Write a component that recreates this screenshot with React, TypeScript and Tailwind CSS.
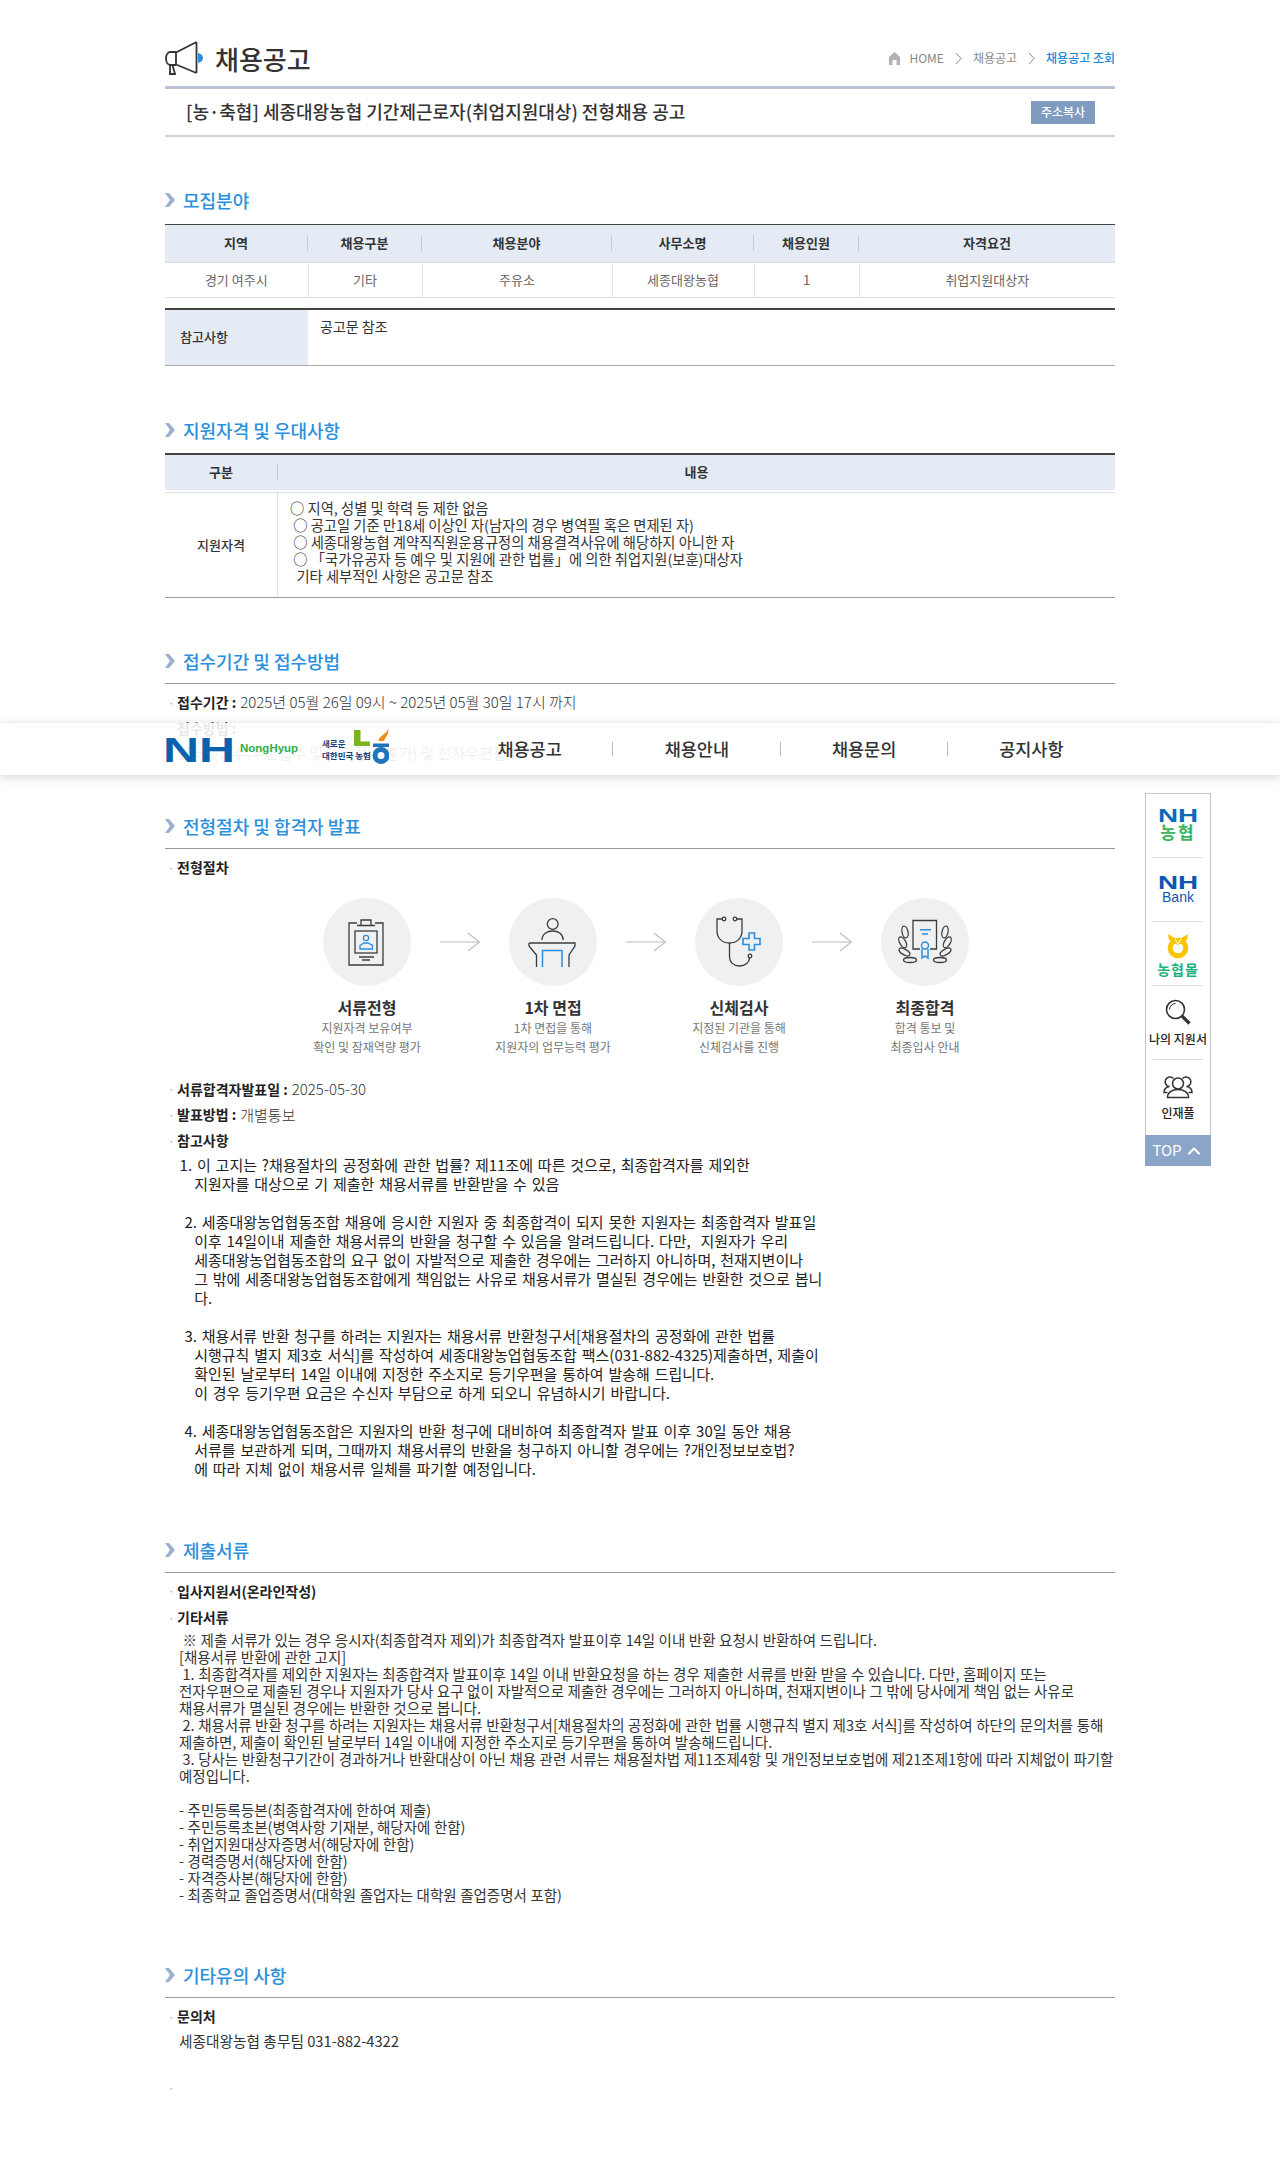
import { ChevronUp } from "lucide-react";

const font = { fontFamily: '"Noto Sans CJK KR", "Noto Sans", sans-serif' };

const steps = [
  { title: "서류전형", sub: ["지원자격 보유여부", "확인 및 잠재역량 평가"] },
  { title: "1차 면접", sub: ["1차 면접을 통해", "지원자의 업무능력 평가"] },
  { title: "신체검사", sub: ["지정된 기관을 통해", "신체검사를 진행"] },
  { title: "최종합격", sub: ["합격 통보 및", "최종입사 안내"] },
];

const noticeLines = [
  "   1. 이 고지는 ?채용절차의 공정화에 관한 법률? 제11조에 따른 것으로, 최종합격자를 제외한",
  "      지원자를 대상으로 기 제출한 채용서류를 반환받을 수 있음",
  "",
  "    2. 세종대왕농업협동조합 채용에 응시한 지원자 중 최종합격이 되지 못한 지원자는 최종합격자 발표일",
  "      이후 14일이내 제출한 채용서류의 반환을 청구할 수 있음을 알려드립니다. 다만,  지원자가 우리",
  "      세종대왕농업협동조합의 요구 없이 자발적으로 제출한 경우에는 그러하지 아니하며, 천재지변이나",
  "      그 밖에 세종대왕농업협동조합에게 책임없는 사유로 채용서류가 멸실된 경우에는 반환한 것으로 봅니",
  "      다.",
  "",
  "    3. 채용서류 반환 청구를 하려는 지원자는 채용서류 반환청구서[채용절차의 공정화에 관한 법률",
  "      시행규칙 별지 제3호 서식]를 작성하여 세종대왕농업협동조합 팩스(031-882-4325)제출하면, 제출이",
  "      확인된 날로부터 14일 이내에 지정한 주소지로 등기우편을 통하여 발송해 드립니다.",
  "      이 경우 등기우편 요금은 수신자 부담으로 하게 되오니 유념하시기 바랍니다.",
  "",
  "    4. 세종대왕농업협동조합은 지원자의 반환 청구에 대비하여 최종합격자 발표 이후 30일 동안 채용",
  "      서류를 보관하게 되며, 그때까지 채용서류의 반환을 청구하지 아니할 경우에는 ?개인정보보호법?",
  "      에 따라 지체 없이 채용서류 일체를 파기할 예정입니다.",
];

const docLines = [
  " ※ 제출 서류가 있는 경우 응시자(최종합격자 제외)가 최종합격자 발표이후 14일 이내 반환 요청시 반환하여 드립니다.",
  "[채용서류 반환에 관한 고지]",
  " 1. 최종합격자를 제외한 지원자는 최종합격자 발표이후 14일 이내 반환요청을 하는 경우 제출한 서류를 반환 받을 수 있습니다. 다만, 홈페이지 또는",
  "전자우편으로 제출된 경우나 지원자가 당사 요구 없이 자발적으로 제출한 경우에는 그러하지 아니하며, 천재지변이나 그 밖에 당사에게 책임 없는 사유로",
  "채용서류가 멸실된 경우에는 반환한 것으로 봅니다.",
  " 2. 채용서류 반환 청구를 하려는 지원자는 채용서류 반환청구서[채용절차의 공정화에 관한 법률 시행규칙 별지 제3호 서식]를 작성하여 하단의 문의처를 통해",
  "제출하면, 제출이 확인된 날로부터 14일 이내에 지정한 주소지로 등기우편을 통하여 발송해드립니다.",
  " 3. 당사는 반환청구기간이 경과하거나 반환대상이 아닌 채용 관련 서류는 채용절차법 제11조제4항 및 개인정보보호법에 제21조제1항에 따라 지체없이 파기할",
  "예정입니다.",
  "",
  "- 주민등록등본(최종합격자에 한하여 제출)",
  "- 주민등록초본(병역사항 기재분, 해당자에 한함)",
  "- 취업지원대상자증명서(해당자에 한함)",
  "- 경력증명서(해당자에 한함)",
  "- 자격증사본(해당자에 한함)",
  "- 최종학교 졸업증명서(대학원 졸업자는 대학원 졸업증명서 포함)",
];

const Chevron = () => (
  <svg width="10" height="14" viewBox="0 0 10 14" className="shrink-0">
    <path d="M0 0h4l6 7-6 7H0l5-7z" fill="#9db1cd" />
  </svg>
);

const SectionTitle = ({ children, line }: { children: string; line?: boolean }) => (
  <div>
    <div className="flex items-center gap-2 h-6">
      <Chevron />
      <h2 className="text-[18px] leading-6 font-medium text-[#2a8fdc]">{children}</h2>
    </div>
    {line && <div className="mt-[10px] border-t border-[#999]" />}
  </div>
);

const Row = ({ label, value, h = "h-[26px]" }: { label?: string; value?: string; h?: string }) => (
  <div className={`flex items-center text-[14px] text-[#333] ${h}`}>
    <span className="w-3 pl-[3px] text-[#aaa] text-[12px]">·</span>
    {label && <b className="font-bold text-[#222]">{label}</b>}
    {value && <span className="ml-1 text-[15px] font-light">{value}</span>}
  </div>
);

const ClipIcon = () => (
  <svg width="88" height="88" viewBox="0 0 88 88" fill="none" strokeWidth="1.3">
    <path d="M34 25h-8v42h34V25h-8" stroke="#3c3c3c" />
    <path d="M38 27v-5h10v5M34 27.5h18" stroke="#3c3c3c" />
    <rect x="32" y="33" width="22" height="22" stroke="#3c3c3c" />
    <circle cx="43" cy="40" r="2.6" stroke="#2a8fdc" />
    <path d="M37 51v-3.5l4-2.5h4l4.5 2.5V51z" stroke="#2a8fdc" />
    <path d="M36 59h15M39 62h8" stroke="#3c3c3c" />
  </svg>
);

const PodiumIcon = () => (
  <svg width="88" height="88" viewBox="0 0 88 88" fill="none" strokeWidth="1.3">
    <circle cx="43.7" cy="26" r="5.4" stroke="#3c3c3c" />
    <path d="M33 42c0-6 5-9 10.7-9s10.500 3 10.500 9" stroke="#3c3c3c" />
    <path d="M20 45h46v3l-6 9v12M20 48l7.500 9v12M20 45v3M66 45v3" stroke="#3c3c3c" />
    <path d="M33.500 69V52.500h19.500V69" stroke="#2a8fdc" strokeWidth="1.500" />
  </svg>
);

const StethIcon = () => (
  <svg width="88" height="88" viewBox="0 0 88 88" fill="none" strokeWidth="1.3">
    <circle cx="29" cy="21" r="1.800" stroke="#3c3c3c" />
    <circle cx="40" cy="21" r="1.800" stroke="#3c3c3c" />
    <path d="M27 21h-5v12c0 7 5 12 12.500 12S47 40 47 33V21h-5" stroke="#3c3c3c" />
    <path d="M34.500 45v14c0 5 4 9 10 9s10-4 10-8v-1" stroke="#3c3c3c" />
    <circle cx="55" cy="58" r="1.800" stroke="#3c3c3c" />
    <path d="M54 35h5.500v5.500h5.500v6h-5.500V52H54v-5.500h-6v-6h6z" stroke="#2a8fdc" strokeWidth="1.600" />
  </svg>
);

const leaves = [
  { cx: 24, cy: 34, rx: 3, ry: 6, r: -12 },
  { cx: 21.7, cy: 44.300, rx: 3, ry: 6, r: -30 },
  { cx: 23.500, cy: 54, rx: 6, ry: 2.800, r: 30 },
  { cx: 29, cy: 62, rx: 6.500, ry: 2.500, r: 0 },
];

const LaurelIcon = () => (
  <svg width="88" height="88" viewBox="0 0 88 88" fill="none" strokeWidth="1.3">
    <path d="M39 51h-7V22.500h23.500V51H49" stroke="#3c3c3c" />
    <path d="M39 31.700h11M41 36h6" stroke="#2a8fdc" strokeWidth="1.500" />
    <circle cx="44" cy="47.500" r="3.500" stroke="#2a8fdc" strokeWidth="1.500" />
    <path d="M41 51v9l3-2 3 2v-9" stroke="#2a8fdc" strokeWidth="1.500" />
    {leaves.map((l, i) => (
      <g key={i} stroke="#3c3c3c">
        <ellipse cx={l.cx} cy={l.cy} rx={l.rx} ry={l.ry} transform={`rotate(${l.r} ${l.cx} ${l.cy})`} />
        <ellipse cx={88 - l.cx} cy={l.cy} rx={l.rx} ry={l.ry} transform={`rotate(${-l.r} ${88 - l.cx} ${l.cy})`} />
      </g>
    ))}
  </svg>
);

const Arrow = () => (
  <svg width="40" height="20" viewBox="0 0 40 20" fill="none" stroke="#bdbdbd" strokeWidth="1.2">
    <path d="M0 10h39.500M28 1l11.500 9L28 19" />
  </svg>
);

const StepCircle = ({ children }: { children: React.ReactNode }) => (
  <div className="w-[88px] h-[88px] rounded-full bg-[#eff0f2]">{children}</div>
);

const Megaphone = () => (
  <svg width="42" height="36" viewBox="0 0 42 36" fill="none" stroke="#333" strokeWidth="1.800">
    <path d="M31.500 1v31M31.500 1L11 11.500v12L31.500 32" />
    <path d="M11 11H5.500C3 11 1 13.500 1 17.500S3 24 5.500 24H11" />
    <path d="M5 24v9h5l-2.500-9" />
    <path d="M33 12c3 .5 5 2.500 5 5s-2 4.500-5 5z" fill="#2a8fdc" stroke="none" />
  </svg>
);

const NhText = ({ w, h, color }: { w: number; h: number; color: string }) => (
  <svg width={w} height={h} viewBox={`0 0 ${w} ${h}`}>
    <text
      x={-h / 12}
      y={h}
      fontFamily="Liberation Sans"
      fontWeight="700"
      fontSize={h / 0.72}
      fill={color}
      textLength={w + h / 6}
      lengthAdjust="spacingAndGlyphs"
    >
      NH
    </text>
  </svg>
);

const NongLogo = () => (
  <svg width="36" height="35" viewBox="0 0 36 35">
    <path d="M1 1h6.500v11.500H17V17H1z" fill="#7ab51d" />
    <path d="M35.500 0c.500 5-3 8-4.500 12h-5.500C26 7 32 6 35.500 0z" fill="#f08a1d" />
    <rect x="20" y="14.500" width="16" height="3.500" fill="#1f74bb" />
    <circle cx="28" cy="26.500" r="6" fill="none" stroke="#1f74bb" strokeWidth="5" />
  </svg>
);

const SideLink = ({ children }: { children: React.ReactNode }) => (
  <div className="flex flex-col items-center border-b border-[#ddd] mx-[7px]">{children}</div>
);

export default function App() {
  return (
    <div className="relative h-[2165px] overflow-hidden bg-white text-[#333]" style={font}>
      <div className="w-[950px] ml-[165px]">
        {/* page header */}
        <div className="h-[86px] pt-[34px] flex justify-between items-center">
          <div className="flex items-center gap-2 -mt-[2px]">
            <Megaphone />
            <h1 className="text-[26px] leading-8 font-medium text-[#333]">채용공고</h1>
          </div>
          <div className="flex items-center text-[12px] text-[#888] -mt-[4px]">
            <svg width="13" height="13" viewBox="0 0 13 13" className="mr-2">
              <path d="M6.500 0L12 5v8H8.500V8h-4v5H1V5z" fill="#b3b3b3" />
            </svg>
            <span>HOME</span>
            <svg width="7" height="13" viewBox="0 0 7 13" fill="none" stroke="#888" className="mx-[11px]">
              <path d="M1 1l5 5.500L1 12" />
            </svg>
            <span>채용공고</span>
            <svg width="7" height="13" viewBox="0 0 7 13" fill="none" stroke="#888" className="mx-[11px]">
              <path d="M1 1l5 5.500L1 12" />
            </svg>
            <span className="text-[#1a8ad8] font-medium">채용공고 조회</span>
          </div>
        </div>
        <div className="border-t-[3px] border-[#bcc3d6]" />
        <div className="h-[48px] flex justify-between items-center pl-[21px] pr-5 border-b-2 border-[#d0d4dc]">
          <h2 className="text-[18px] font-medium text-[#333] -mt-[2px]">[농·축협] 세종대왕농협 기간제근로자(취업지원대상) 전형채용 공고</h2>
          <button className="w-16 h-[23px] bg-[#7f9bbf] text-white text-[12px] font-medium">주소복사</button>
        </div>

        {/* 모집분야 */}
        <div className="mt-[51px] mb-3">
          <SectionTitle>모집분야</SectionTitle>
        </div>
        <div className="border-t border-[#444]">
          <table className="w-full table-fixed text-[13px] text-center">
            <thead>
              <tr className="h-[37px] bg-[#e4ebf5] font-bold text-[#333]">
                {[
                  ["지역", "w-[143px]"],
                  ["채용구분", "w-[114px]"],
                  ["채용분야", "w-[190px]"],
                  ["사무소명", "w-[142px]"],
                  ["채용인원", "w-[105px]"],
                  ["자격요건", ""],
                ].map(([t, w], i) => (
                  <th key={t} className={`${w} p-0 font-bold`}>
                    <div className={`h-4 leading-4 ${i < 5 ? "border-r border-[#c5ccd8]" : ""}`}>{t}</div>
                  </th>
                ))}
              </tr>
            </thead>
            <tbody>
              <tr className="h-[35px] border-t border-[#d8dde5] border-b border-[#aaa] text-[#666]">
                {["경기 여주시", "기타", "주유소", "세종대왕농협", "1", "취업지원대상자"].map((t, i) => (
                  <td key={i} className={`p-0 ${i < 5 ? "border-r border-[#e3e3e3]" : ""}`}>{t}</td>
                ))}
              </tr>
            </tbody>
          </table>
        </div>

        <div className="mt-[10px] flex h-[58px] border-t-2 border-[#444] border-b border-b-[#aaa] text-[13px]">
          <div className="w-[143px] bg-[#e4ebf5] pl-[15px] flex items-center font-medium">참고사항</div>
          <div className="pl-3 pt-[6px] leading-5 text-[14px]">공고문 참조</div>
        </div>

        {/* 지원자격 */}
        <div className="mt-[52px] mb-[11px]">
          <SectionTitle>지원자격 및 우대사항</SectionTitle>
        </div>
        <div className="border-t-2 border-[#444] text-[13px]">
          <div className="flex h-[35px] items-center bg-[#e4ebf5] font-bold text-center">
            <div className="w-[113px] h-4 leading-4 border-r border-[#c5ccd8]">구분</div>
            <div className="flex-1">내용</div>
          </div>
          <div className="flex mt-[2px] border-t border-[#dde1e7] border-b border-b-[#999] h-[106px]">
            <div className="w-[113px] flex items-center justify-center font-medium border-r border-[#e3e3e3]">지원자격</div>
            <div className="pl-3 pt-[6px] text-[14.300px] leading-[17px] whitespace-pre text-[#333]">
              <div>○ 지역, 성별 및 학력 등 제한 없음</div>
              <div> ○ 공고일 기준 만18세 이상인 자(남자의 경우 병역필 혹은 면제된 자)</div>
              <div> ○ 세종대왕농협 계약직직원운용규정의 채용결격사유에 해당하지 아니한 자</div>
              <div> ○ 「국가유공자 등 예우 및 지원에 관한 법률」에 의한 취업지원(보훈)대상자</div>
              <div>  기타 세부적인 사항은 공고문 참조</div>
            </div>
          </div>
        </div>

        {/* 접수기간 */}
        <div className="mt-[51px]">
          <SectionTitle line>접수기간 및 접수방법</SectionTitle>
        </div>
        <div className="pt-[6px]">
          <Row label="접수기간 :" value="2025년 05월 26일 09시 ~ 2025년 05월 30일 17시 까지" />
          <Row label="접수방법 :" />
          <div className="h-[21px] leading-[21px] pl-3 text-[15px] font-light">인터넷접수(우편접수 및 대리접수 불가) 및 전자우편접수</div>
        </div>

        {/* 전형절차 */}
        <div className="mt-[51px]">
          <SectionTitle line>전형절차 및 합격자 발표</SectionTitle>
        </div>
        <div className="pt-[6px]">
          <Row label="전형절차" />
        </div>
        <div className="mt-[17px] pl-[158px] flex items-center gap-[29px]">
          <StepCircle><ClipIcon /></StepCircle>
          <Arrow />
          <StepCircle><PodiumIcon /></StepCircle>
          <Arrow />
          <StepCircle><StethIcon /></StepCircle>
          <Arrow />
          <StepCircle><LaurelIcon /></StepCircle>
        </div>
        <div className="ml-[109px] mt-[10px] grid grid-cols-[186px_186px_186px_186px] text-center">
          {steps.map((s) => (
            <div key={s.title}>
              <div className="h-[22px] leading-[22px] text-[16px] font-bold text-[#333]">{s.title}</div>
              {s.sub.map((t) => (
                <div key={t} className="h-[19px] leading-[19px] text-[12px] text-[#777]">{t}</div>
              ))}
            </div>
          ))}
        </div>
        <div className="mt-[21px]">
          <Row label="서류합격자발표일 :" value="2025-05-30" h="h-[25.500px]" />
          <Row label="발표방법 :" value="개별통보" h="h-[25.500px]" />
          <Row label="참고사항" h="h-[26px]" />
        </div>
        <div className="mt-[1px] text-[15px] leading-[19px] [word-spacing:1.5px] whitespace-pre text-[#222]">
          {noticeLines.map((l, i) => (
            <div key={i} className="h-[19px]">{l}</div>
          ))}
        </div>

        {/* 제출서류 */}
        <div className="mt-[60px]">
          <SectionTitle line>제출서류</SectionTitle>
        </div>
        <div className="pt-[5px]">
          <Row label="입사지원서(온라인작성)" h="h-[27px]" />
          <Row label="기타서류" h="h-[26px]" />
        </div>
        <div className="pl-[14px] text-[14.500px] leading-[17px] [word-spacing:0.3px] whitespace-pre">
          {docLines.map((l, i) => (
            <div key={i} className="h-[17px]">{l}</div>
          ))}
        </div>

        {/* 기타유의 사항 */}
        <div className="mt-[60px]">
          <SectionTitle line>기타유의 사항</SectionTitle>
        </div>
        <div className="pt-[6px]">
          <Row label="문의처" />
          <div className="h-[21px] leading-[21px] pl-[14px] text-[14.700px]">세종대왕농협 총무팀 031-882-4322</div>
          <div className="mt-6">
            <Row />
          </div>
        </div>
      </div>

      {/* fixed top menu over the content */}
      <div className="absolute top-[723px] left-0 w-full h-[52px] bg-white/90 shadow-[0_2px_10px_rgba(0,0,0,0.18)]">
        <div className="w-[950px] ml-[165px] h-full flex items-center">
          <div className="w-[281px] flex items-center">
            <NhText w={68} h={25} color="#0a62ad" />
            <span className="ml-[7px] w-[82px] text-[11.500px] font-bold text-[#2db04b]" style={{ fontFamily: "Liberation Sans" }}>NongHyup</span>
            <div className="w-[31px] text-[8.500px] leading-[12px] font-bold text-[#1d3f7a] whitespace-nowrap">
              <div>새로운</div>
              <div>대한민국 농협</div>
            </div>
            <div className="-mt-[6px]">
              <NongLogo />
            </div>
          </div>
          <nav className="flex-1 grid grid-cols-4 text-center text-[17.500px] font-medium text-[#333]">
            {["채용공고", "채용안내", "채용문의", "공지사항"].map((t, i) => (
              <div key={t} className="flex items-center justify-center relative">
                {t}
                {i < 3 && <span className="absolute right-0 top-1/2 -translate-y-1/2 h-[14px] border-r border-[#bbb]" />}
              </div>
            ))}
          </nav>
        </div>
      </div>

      {/* quick links */}
      <div className="absolute left-[1145px] top-[793px] w-[66px] bg-white">
        <div className="border-x border-t border-[#c5c5c5]">
          <SideLink>
            <div className="h-[63px] pt-[15px] flex flex-col items-center">
              <NhText w={38} h={13} color="#0a6ab8" />
              <span className="text-[17px] leading-[18px] tracking-[2px] font-bold text-[#3bb55a] mt-[1px]">농협</span>
            </div>
          </SideLink>
          <SideLink>
            <div className="h-[63px] pt-[18px] flex flex-col items-center">
              <NhText w={38} h={13} color="#0b55b5" />
              <span className="text-[14px] leading-[16px] font-medium text-[#1257b5]" style={{ fontFamily: "Liberation Sans" }}>Bank</span>
            </div>
          </SideLink>
          <SideLink>
            <div className="h-[63px] pt-[12px] flex flex-col items-center">
              <svg width="24" height="25" viewBox="0 0 24 25" fill="none">
                <circle cx="12" cy="14" r="7.800" stroke="#f9c400" strokeWidth="5" />
                <path d="M2 0l10 6 10-6-1 6-9 5-9-5z" fill="#f9c400" />
                <path d="M9 5l3 5 3-5" stroke="#fff" strokeWidth="1" />
              </svg>
              <span className="text-[14px] leading-[16px] tracking-[1px] mt-[2px] font-bold text-[#1db380]">농협몰</span>
            </div>
          </SideLink>
          <SideLink>
            <div className="h-[73px] pt-[13px] flex flex-col items-center">
              <svg width="26" height="26" viewBox="0 0 26 26" fill="none" stroke="#333">
                <circle cx="10.500" cy="10.500" r="9" strokeWidth="1.600" />
                <path d="M4.500 10.500a6 6 0 0 1 6-6" strokeWidth="1" />
                <path d="M17 17l7.500 7.500" strokeWidth="3.200" />
              </svg>
              <span className="text-[12px] leading-4 mt-[6px] font-medium text-[#222] whitespace-nowrap">나의 지원서</span>
            </div>
          </SideLink>
          <div className="h-[75px] pt-[13px] flex flex-col items-center">
            <svg width="30" height="26" viewBox="0 0 30 26" fill="none" stroke="#333" strokeWidth="1.500">
              <circle cx="15" cy="10.500" r="5.500" />
              <path d="M4.500 24.500c0-5 4.500-8 10.500-8s10.500 3 10.500 8z" />
              <path d="M10.500 5.500A4.800 4.800 0 1 0 6.500 13.500C3 14 1 16.500 1 19.500h3.500" />
              <path d="M19.500 5.500a4.800 4.800 0 1 1 4 8c3.500.5 5.500 3 5.500 6h-3.500" />
            </svg>
            <span className="text-[12px] leading-4 mt-[6px] font-medium text-[#222]">인재풀</span>
          </div>
        </div>
        <div className="h-[31px] bg-[#8aa5c8] text-white text-[15px] flex items-center justify-center gap-[2px]">
          TOP
          <ChevronUp size={20} strokeWidth={2.500} />
        </div>
      </div>
    </div>
  );
}
